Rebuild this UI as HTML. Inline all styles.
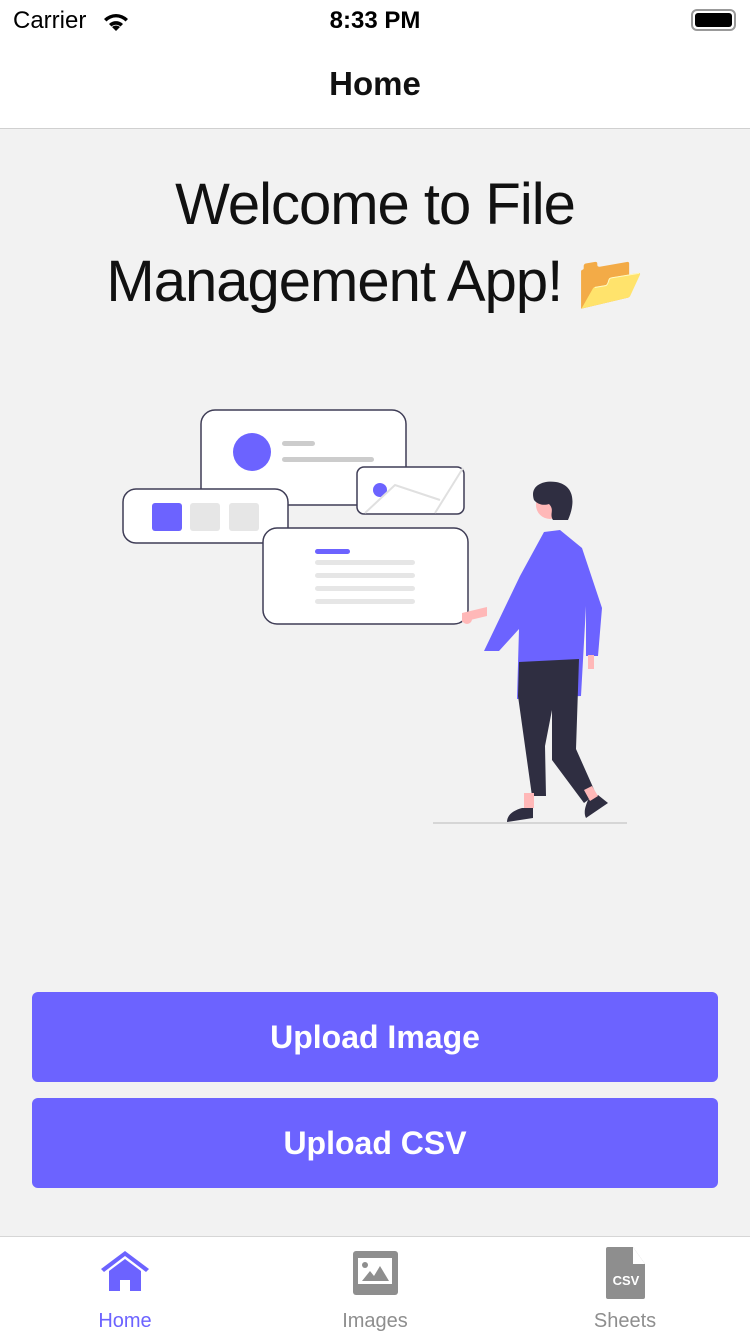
<!DOCTYPE html>
<html><head><meta charset="utf-8"><style>
*{margin:0;padding:0;box-sizing:border-box}
body{width:750px;height:1334px;background:#f2f2f2;font-family:"Liberation Sans",sans-serif;position:relative;overflow:hidden}
.status{position:absolute;top:0;left:0;width:750px;height:40px;background:#fff}
.nav{position:absolute;top:40px;left:0;width:750px;height:89px;background:#fff;border-bottom:1px solid #d0d0d0;text-align:center;font-weight:bold;font-size:33px;line-height:88px;color:#111}
.title{position:absolute;top:166px;left:0;width:750px;text-align:center;font-size:58px;line-height:77px;font-weight:300;color:#111;letter-spacing:-1px}
.btn{position:absolute;left:32px;width:686px;height:90px;background:#6c63ff;border-radius:6px;color:#fff;font-weight:bold;font-size:32px;text-align:center;line-height:90px}
.tab{position:absolute;top:1236px;left:0;width:750px;height:98px;background:#fff;border-top:1px solid #d6d6d6}
.tl{position:absolute;top:1310px;font-size:20px;width:250px;text-align:center;color:#8e8e8e}
</style></head><body>
<div class="status">
<span style="position:absolute;left:13px;top:7px;font-size:24px;color:#000">Carrier</span>
<svg style="position:absolute;left:100px;top:9px" width="32" height="24" viewBox="0 0 32 24"><path d="M16 22l4-4a6 6 0 0 0-8 0z M9 15a10 10 0 0 1 14 0l-2.5 2.5a6.5 6.5 0 0 0-9 0z M4 10a17 17 0 0 1 24 0l-2.5 2.5a13 13 0 0 0-19 0z" fill="#000"/></svg>
<span style="position:absolute;left:0;width:750px;text-align:center;top:7px;font-size:24px;font-weight:bold;color:#000">8:33 PM</span>
<div style="position:absolute;left:691px;top:9px;width:45px;height:22px;border:2px solid #999;border-radius:6px;padding:2px"><div style="width:100%;height:100%;background:#000;border-radius:3px"></div></div>
</div>
<div class="nav">Home</div>
<div class="title">Welcome to File<br>Management App! <span style="font-size:54px">📂</span></div>
<svg style="position:absolute;left:0;top:0" width="750" height="900" viewBox="0 0 750 900">
<rect x="201" y="410" width="205" height="95" rx="14" fill="#fff" stroke="#3f3d56" stroke-width="1.5"/>
<circle cx="252" cy="452" r="19" fill="#6c63ff"/>
<rect x="282" y="441" width="33" height="5" rx="2.5" fill="#ccc"/>
<rect x="282" y="457" width="92" height="5" rx="2.5" fill="#ccc"/>
<rect x="123" y="489" width="165" height="54" rx="13" fill="#fff" stroke="#3f3d56" stroke-width="1.5"/>
<rect x="152" y="503" width="30" height="28" rx="3" fill="#6c63ff"/>
<rect x="190" y="503" width="30" height="28" rx="3" fill="#e6e6e6"/>
<rect x="229" y="503" width="30" height="28" rx="3" fill="#e6e6e6"/>
<rect x="357" y="467" width="107" height="47" rx="7" fill="#fff" stroke="#3f3d56" stroke-width="1.5"/>
<circle cx="380" cy="490" r="7" fill="#6c63ff"/>
<path d="M365 513l30-28 45 15M435 513l28-45" stroke="#e0e0e0" stroke-width="2" fill="none"/>
<rect x="263" y="528" width="205" height="96" rx="14" fill="#fff" stroke="#3f3d56" stroke-width="1.5"/>
<rect x="315" y="549" width="35" height="5" rx="2.5" fill="#6c63ff"/>
<rect x="315" y="560" width="100" height="5" rx="2.5" fill="#e6e6e6"/>
<rect x="315" y="573" width="100" height="5" rx="2.5" fill="#e6e6e6"/>
<rect x="315" y="586" width="100" height="5" rx="2.5" fill="#e6e6e6"/>
<rect x="315" y="599" width="100" height="5" rx="2.5" fill="#e6e6e6"/>
<line x1="433" y1="823" x2="627" y2="823" stroke="#ccc" stroke-width="1.5"/>
<path d="M462 622l25-6 0-9-25 6z" fill="#ffb8b8"/>
<circle cx="467" cy="619" r="5" fill="#ffb8b8"/>
<circle cx="550" cy="505" r="14" fill="#ffb8b8"/>
<path d="M534 500c-5-15 10-20 22-18 18 3 20 20 12 38l-15 0c-4-6 2-10-4-16-6 2-12 0-15-4z" fill="#2f2e41"/>
<path d="M544 532l16-2 22 18 20 60-4 48-12 0 0-50-5 90-64 3 2-70-20 22-15 0 36-75z" fill="#6c63ff"/>
<path d="M588 655l6 0 0 14-6 0z" fill="#ffb8b8"/>
<path d="M519 662l60-3-3 90 20 45-12 9-32-43 0-50-7 36 1 50-14 0-14-100z" fill="#2f2e41"/>
<path d="M522 808l11 0 0 10-26 4c0-8 8-12 15-14z M588 800l10-5 10 8-22 15c-3-6 0-13 2-18z" fill="#2f2e41"/>
<path d="M524 793l10 0 0 15-10 0z M584 790l8-4 6 10-8 5z" fill="#ffb8b8"/>
</svg>
<div class="btn" style="top:992px">Upload Image</div>
<div class="btn" style="top:1098px">Upload CSV</div>
<div class="tab"></div>
<svg style="position:absolute;left:99px;top:1249px" width="52" height="44" viewBox="0 0 52 44"><path d="M2 20L26 2l24 18-3 3L26 7 5 23z" fill="#6c63ff"/><path d="M10 22L26 10l16 12v20H31V31h-10v11H10z" fill="#6c63ff"/></svg>
<svg style="position:absolute;left:353px;top:1251px" width="45" height="45" viewBox="0 0 45 45"><rect width="45" height="44" rx="3" fill="#8e8e8e"/><rect x="5" y="7" width="34" height="26" fill="#fff"/><circle cx="12" cy="14" r="3" fill="#8e8e8e"/><path d="M9 30l8-10 4 5 6-10 9 15z" fill="#8e8e8e"/></svg>
<svg style="position:absolute;left:606px;top:1247px" width="40" height="52" viewBox="0 0 40 52"><path d="M2 0h25l12 17v33a2 2 0 0 1-2 2H2a2 2 0 0 1-2-2V2a2 2 0 0 1 2-2z" fill="#8e8e8e"/><path d="M27 0v17h12" fill="#fff"/><text x="20" y="38" font-size="13" font-weight="bold" fill="#fff" text-anchor="middle" font-family="Liberation Sans Narrow,Liberation Sans,sans-serif">CSV</text></svg>
<div class="tl" style="left:0;color:#6c63ff">Home</div>
<div class="tl" style="left:250px">Images</div>
<div class="tl" style="left:500px">Sheets</div>
</body></html>
